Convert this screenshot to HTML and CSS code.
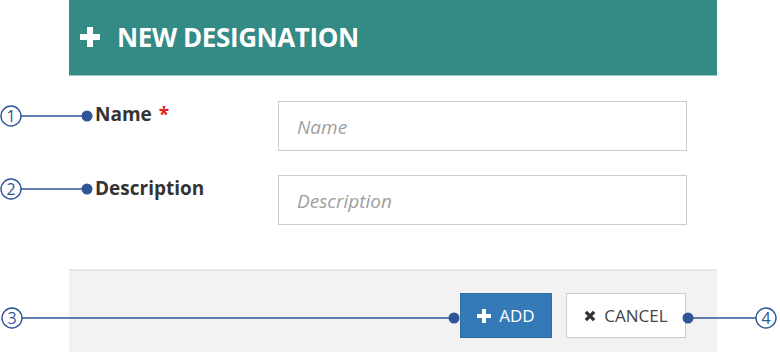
FILE: index.html
```html
<!DOCTYPE html>
<html lang="en">
<head>
    <meta charset="UTF-8">
    <title>New Designation</title>
    <link rel="stylesheet" href="styles.css">
</head>
<body>
    <div class="page">
        <div class="dialog">
            <div class="dialog-header">
                <span class="plus-icon">
                    <svg width="20" height="20" viewBox="0 0 20 20"><path d="M7 0h6v7h7v6h-7v7H7v-7H0V7h7z" fill="#fff"/></svg>
                </span>
                <h1>NEW DESIGNATION</h1>
            </div>
            <div class="dialog-body">
                <div class="form-row">
                    <label class="form-label" for="name">Name <span class="required">*</span></label>
                    <input class="form-input" id="name" type="text" placeholder="Name">
                </div>
                <div class="form-row">
                    <label class="form-label" for="description">Description</label>
                    <input class="form-input" id="description" type="text" placeholder="Description">
                </div>
            </div>
            <div class="dialog-footer">
                <button class="btn btn-add">
                    <svg width="14" height="14" viewBox="0 0 14 14"><path d="M5 0h4v5h5v4H9v5H5V9H0V5h5z" fill="#fff"/></svg>
                    ADD
                </button>
                <button class="btn btn-cancel">
                    <svg width="12" height="12" viewBox="0 0 12 12"><path d="M1.8 1.8l8.4 8.4M10.2 1.8l-8.4 8.4" stroke="#333" stroke-width="3.2"/></svg>
                    CANCEL
                </button>
            </div>
        </div>

        <!-- callout annotations -->
        <svg class="callouts" width="780" height="353" viewBox="0 0 780 353">
            <g stroke="#2f5597" stroke-width="1.4" fill="none">
                <circle cx="11" cy="116" r="10"/>
                <circle cx="11" cy="189" r="10"/>
                <circle cx="12" cy="318" r="10"/>
                <circle cx="766" cy="318" r="10"/>
                <path d="M21 116H87M21 189H87M22 318H454M688 318H756"/>
            </g>
            <g fill="#2f5597">
                <circle cx="87" cy="116" r="5.5"/>
                <circle cx="87" cy="189" r="5.5"/>
                <circle cx="454" cy="318" r="5.5"/>
                <circle cx="688" cy="318" r="5.5"/>
            </g>
            <g class="callout-num" fill="#2f5597" text-anchor="middle">
                <text x="11" y="122">1</text>
                <text x="11" y="195">2</text>
                <text x="12" y="324">3</text>
                <text x="766" y="324">4</text>
            </g>
        </svg>
    </div>
</body>
</html>
```

FILE: styles.css
```css
body {
    margin: 0;
    background: #fff;
    font-family: 'Open Sans', 'Noto Sans', sans-serif;
}

.page {
    position: relative;
    width: 780px;
    height: 353px;
    overflow: hidden;
}

.dialog {
    margin-left: 69px;
    width: 648px;
}

.dialog-header {
    display: flex;
    align-items: center;
    gap: 17px;
    height: 76px;
    padding-left: 11px;
    background: #348a85;
    border-bottom: 1px solid #9cc7c4;
    box-sizing: border-box;
}

.plus-icon {
    display: flex;
    margin-top: -2px;
}

.dialog-header h1 {
    margin: 0 0 2px;
    font-size: 26px;
    font-weight: 700;
    color: #fff;
    letter-spacing: -0.4px;
}

.dialog-body {
    display: flex;
    flex-direction: column;
    gap: 24px;
    padding: 25px 30px 44px 26px;
}

.form-row {
    display: flex;
    align-items: flex-start;
}

.form-label {
    width: 183px;
    padding-top: 0;
    font-size: 19px;
    font-weight: 700;
    color: #333;
}

.required {
    color: #e02020;
    margin-left: 2px;
}

.form-input {
    width: 409px;
    height: 50px;
    box-sizing: border-box;
    border: 1px solid #ccc;
    padding: 2px 18px 0;
    font-family: inherit;
    font-size: 19px;
    color: #333;
    outline: none;
}

.form-input::placeholder {
    color: #a0a0a0;
    font-style: italic;
}

.dialog-footer {
    display: flex;
    justify-content: flex-end;
    gap: 14px;
    height: 83px;
    padding: 22px 31px 0 0;
    box-sizing: border-box;
    background: #f2f2f2;
    border-top: 2px solid #e8e8e8;
}

.btn {
    display: flex;
    align-items: center;
    justify-content: center;
    gap: 8px;
    height: 45px;
    font-family: inherit;
    font-size: 17px;
    border-radius: 0;
    cursor: pointer;
    padding: 0;
}

.btn-add {
    width: 92px;
    background: #337ab7;
    border: 1px solid #2e6da4;
    color: #fff;
}

.btn-cancel {
    width: 120px;
    background: #fff;
    border: 1px solid #ccc;
    color: #444;
}

.callouts {
    position: absolute;
    left: 0;
    top: 0;
    pointer-events: none;
}

.callout-num {
    font-family: 'Open Sans', sans-serif;
    font-size: 16px;
}
```
